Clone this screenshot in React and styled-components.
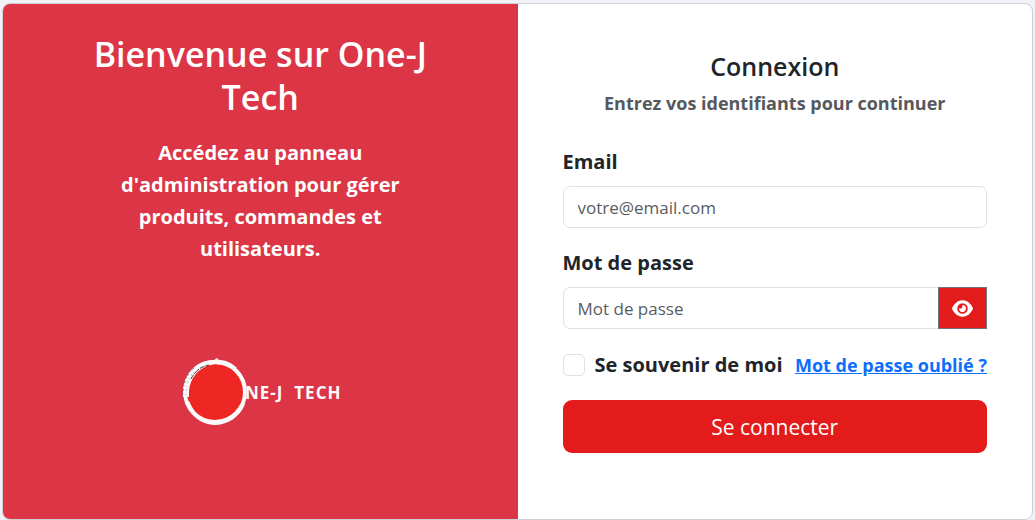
import React, { useState } from "react";
import styled, { createGlobalStyle } from "styled-components";
import { FaEye } from "react-icons/fa6";

const GlobalStyle = createGlobalStyle`
  * { box-sizing: border-box; }
  body {
    margin: 0;
    background: #f0f2f7;
    color: #212529;
    font-family: "Segoe UI", "Open Sans", "Noto Sans", sans-serif;
  }
  h1, h2, p { margin: 0; }
`;

const Page = styled.main`
  display: flex;
  min-height: 100vh;
  padding: 3px 2px 0;
`;

const Card = styled.section`
  display: flex;
  flex: 1;
  overflow: hidden;
  background: #fff;
  border: 1px solid #ced0d3;
  border-radius: 8px;
`;

const Welcome = styled.div`
  width: 50%;
  display: flex;
  flex-direction: column;
  align-items: center;
  padding: 29px 72px;
  background: #dc3545;
  color: #fff;
  text-align: center;
`;

const WelcomeTitle = styled.h1`
  font-size: 34px;
  font-weight: 600;
  line-height: 43px;
`;

const WelcomeText = styled.p`
  max-width: 300px;
  margin-top: 18px;
  font-size: 20px;
  font-weight: 700;
  line-height: 32px;
`;

const Logo = styled.svg`
  margin-top: 90px;
`;

const LoginPanel = styled.div`
  width: 50%;
  padding: 46px 45px;
`;

const Title = styled.h2`
  font-size: 25px;
  font-weight: 600;
  line-height: 32px;
  text-align: center;
`;

const Subtitle = styled.p`
  margin-top: 8px;
  color: #55595d;
  font-size: 18px;
  font-weight: 700;
  line-height: 27px;
  text-align: center;
`;

const Form = styled.form`
  display: flex;
  flex-direction: column;
  gap: 19px;
  margin-top: 29px;
`;

const Field = styled.div`
  display: flex;
  flex-direction: column;
  gap: 8px;
`;

const Label = styled.label`
  font-size: 20px;
  font-weight: 700;
  line-height: 32px;
`;

const InputGroup = styled.div`
  display: flex;
`;

const Input = styled.input`
  flex: 1;
  min-width: 0;
  height: 42px;
  padding: 0 14px;
  border: 1px solid #dee2e6;
  border-radius: ${({ $joined }) => ($joined ? "7px 0 0 7px" : "7px")};
  background: #fff;
  color: #212529;
  font-family: inherit;
  font-size: 17px;
  &::placeholder {
    color: #595c5f;
    opacity: 1;
  }
`;

const RevealButton = styled.button`
  display: flex;
  align-items: center;
  justify-content: center;
  width: 49px;
  margin-left: -1px;
  padding: 0;
  border: 1px solid #6c757d;
  background: #e31b1b;
  color: #fff;
  cursor: pointer;
`;

const Options = styled.div`
  display: flex;
  align-items: center;
  justify-content: space-between;
  min-height: 33px;
  white-space: nowrap;
`;

const Remember = styled.div`
  display: flex;
  align-items: center;
  gap: 10px;
`;

const Checkbox = styled.input`
  appearance: none;
  width: 22px;
  height: 22px;
  margin: 0;
  border: 1px solid #dee2e6;
  border-radius: 5px;
  background: #fff;
  &:checked {
    border-color: #0d6efd;
    background: #0d6efd;
  }
`;

const ForgotLink = styled.a`
  color: #0d6efd;
  font-size: 18px;
  font-weight: 700;
  line-height: 32px;
`;

const SubmitButton = styled.button`
  height: 53px;
  border: 0;
  border-radius: 9px;
  background: #e31b1b;
  color: #fff;
  font-family: inherit;
  font-size: 21px;
  cursor: pointer;
`;

function BrandLogo() {
  return (
    <Logo width="160" height="72" viewBox="0 0 160 72" role="img" aria-label="One-J Tech">
      <circle cx="35" cy="37" r="30" fill="#ee2724" stroke="#fafafa" strokeWidth="4" />
      <path d="M3 42C2 20 15 5 34 5L37 3L39 5C46 5 52 8 57 13L50 13C43 9 35 8 27 11C15 16 8 27 9 42Z" fill="#fafafa" />
      <path d="M5 46C11 61 20 69 34 70C48 70 60 62 65 49L60 50C54 60 46 65 34 65C23 65 15 60 9 46Z" fill="#fafafa" />
      <path d="M11 24C15 16 20 12 29 10" fill="none" stroke="#41363a" strokeWidth="1" strokeDasharray="5 1 7 1" />
      <path d="M3 44C2 29 7 18 15 12" fill="none" stroke="#6f6669" strokeWidth="1" strokeDasharray="2 3 1 2" />
      <path d="M6 40C6 29 9 22 14 17" fill="none" stroke="#dad8d9" strokeWidth="2" strokeDasharray="1 3 2 2" />
      <text x="65" y="44" fill="#fafafa" fontSize="17" fontWeight="700" letterSpacing="1">
        {"NE-J\u00a0 TECH"}
      </text>
    </Logo>
  );
}

export default function App() {
  const [visible, setVisible] = useState(false);

  return (
    <>
      <GlobalStyle />
      <Page>
        <Card>
          <Welcome>
            <WelcomeTitle>Bienvenue sur One-J Tech</WelcomeTitle>
            <WelcomeText>
              Accédez au panneau d'administration pour gérer produits, commandes et utilisateurs.
            </WelcomeText>
            <BrandLogo />
          </Welcome>
          <LoginPanel>
            <Title>Connexion</Title>
            <Subtitle>Entrez vos identifiants pour continuer</Subtitle>
            <Form onSubmit={(event) => event.preventDefault()}>
              <Field>
                <Label htmlFor="email">Email</Label>
                <InputGroup>
                  <Input id="email" type="email" placeholder="votre@email.com" />
                </InputGroup>
              </Field>
              <Field>
                <Label htmlFor="password">Mot de passe</Label>
                <InputGroup>
                  <Input
                    id="password"
                    type={visible ? "text" : "password"}
                    placeholder="Mot de passe"
                    $joined
                  />
                  <RevealButton
                    type="button"
                    aria-label="Afficher le mot de passe"
                    onClick={() => setVisible(!visible)}
                  >
                    <FaEye size={21} />
                  </RevealButton>
                </InputGroup>
              </Field>
              <Options>
                <Remember>
                  <Checkbox id="remember" type="checkbox" />
                  <Label htmlFor="remember">Se souvenir de moi</Label>
                </Remember>
                <ForgotLink href="#">Mot de passe oublié ?</ForgotLink>
              </Options>
              <SubmitButton type="submit">Se connecter</SubmitButton>
            </Form>
          </LoginPanel>
        </Card>
      </Page>
    </>
  );
}
